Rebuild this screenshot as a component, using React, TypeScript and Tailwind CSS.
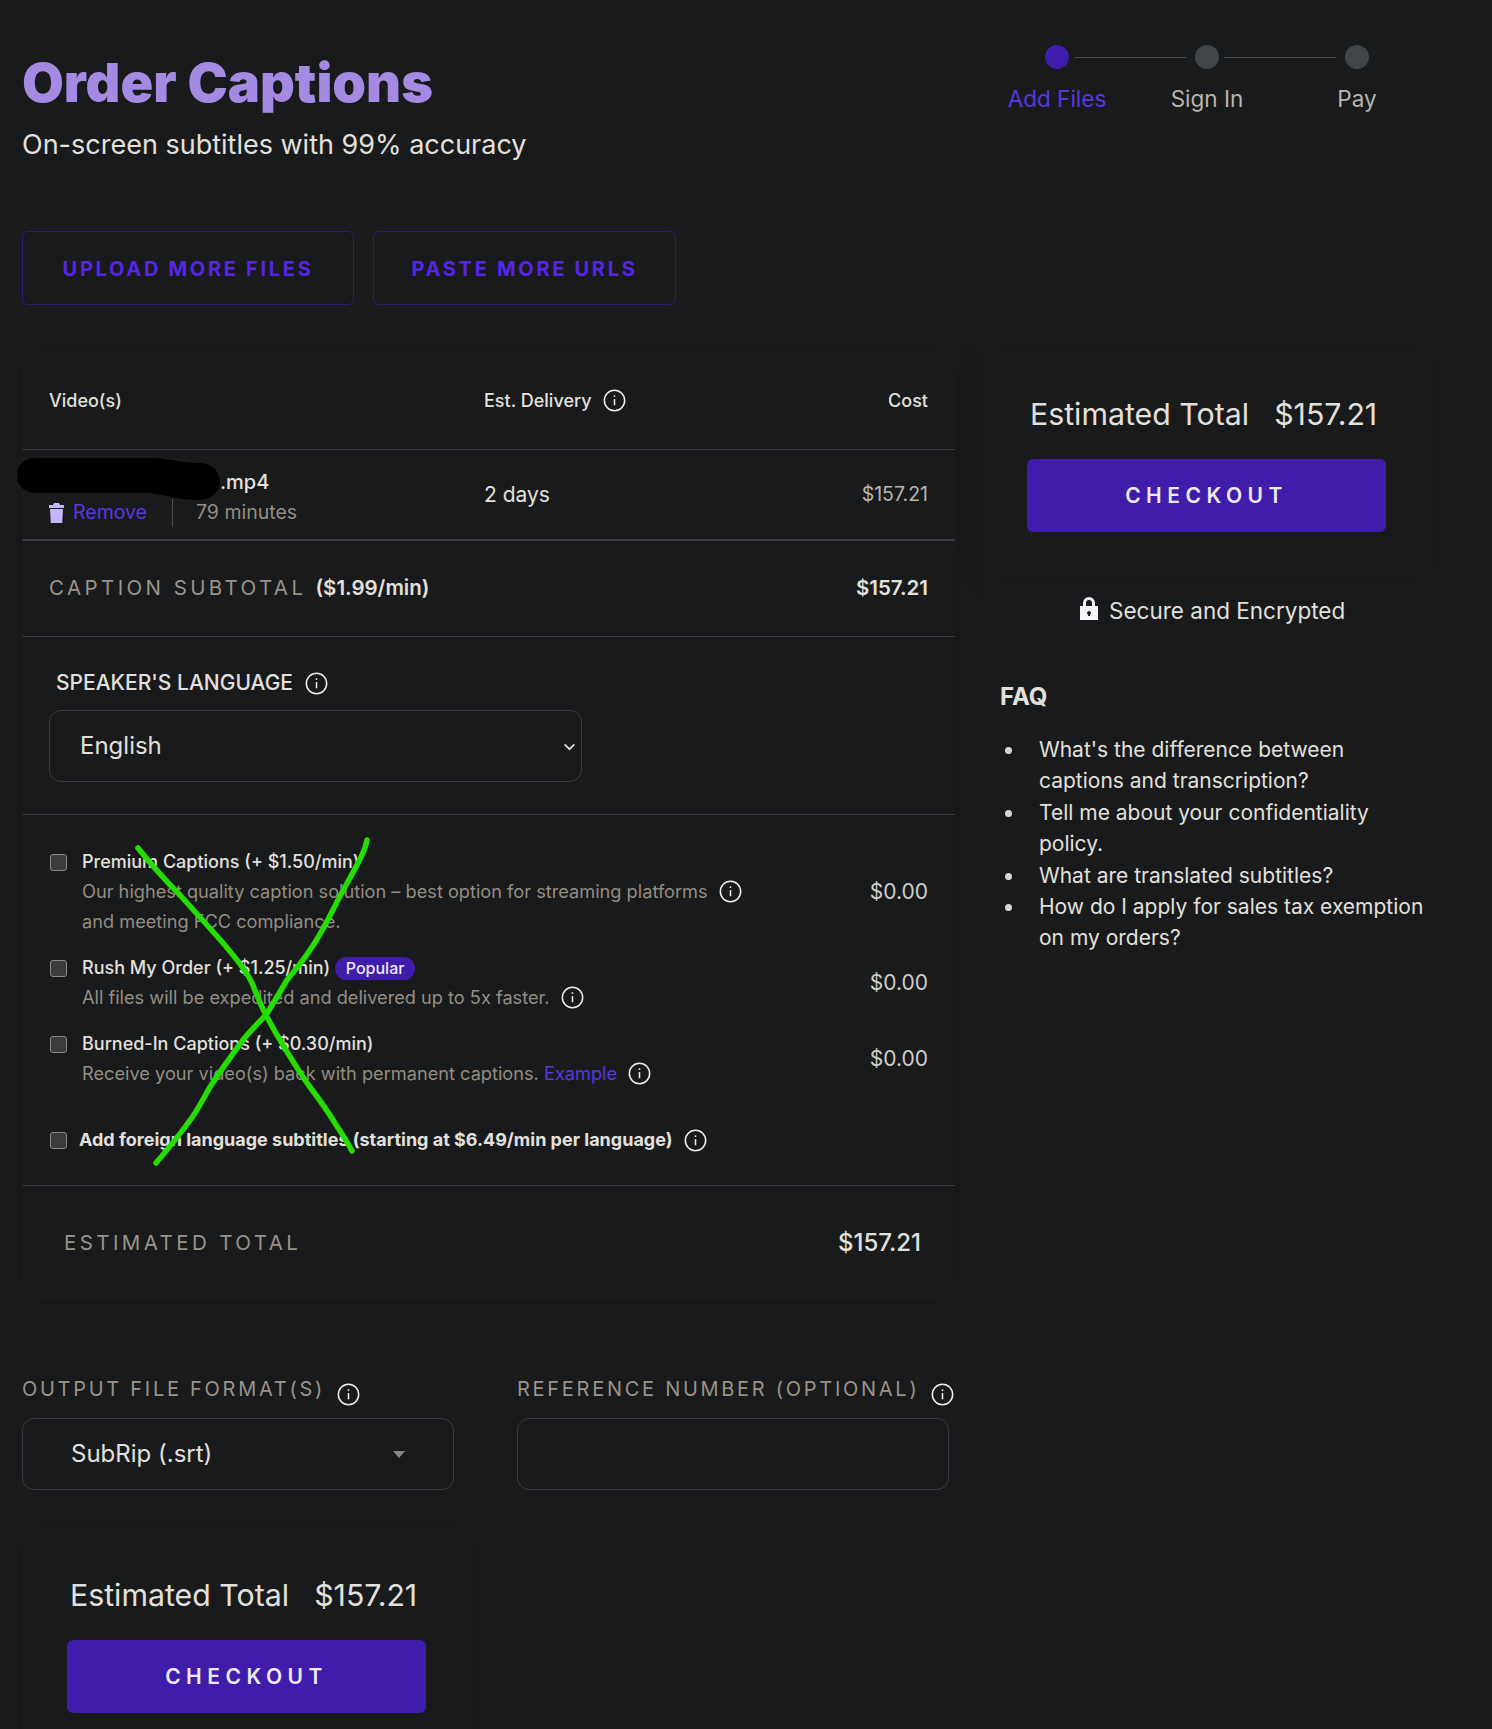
import React from "react";

function InfoIcon({ className }: { className: string }) {
  return (
    <svg viewBox="0 0 24 24" className={"shrink-0 " + className} fill="none" stroke="#eeeeee" strokeWidth="1.6">
      <circle cx="12" cy="12" r="10.6" />
      <line x1="12" y1="10.5" x2="12" y2="17" />
      <circle cx="12" cy="7.4" r="1" fill="#eeeeee" stroke="none" />
    </svg>
  );
}

function Box({ className = "" }: { className?: string }) {
  return <span className={"block w-[17px] h-[17px] rounded-[3px] bg-[#3b3b3b] border border-[#8a8a8a] shrink-0 " + className} />;
}

function TotalCard({ className = "" }: { className?: string }) {
  return (
    <div className={"rounded-lg bg-[#191a1c] shadow-[0_0_30px_rgba(0,0,0,0.1)] " + className}>
      <div className="flex h-[40px] items-center whitespace-nowrap pl-[3px] pt-[2px] text-[30.3px] text-[#e2e0dc]">
        <span>Estimated Total</span>
        <span className="ml-[25px]">$157.21</span>
      </div>
      <button className="mt-[25px] flex h-[73px] w-[359px] items-center justify-center rounded-[6px] bg-[#3f1ca9] text-[21px] font-semibold tracking-[5.5px] text-[#ece9f5]">
        CHECKOUT
      </button>
    </div>
  );
}

function Bullet({ children }: { children: React.ReactNode }) {
  return (
    <li className="flex">
      <span className="ml-[4px] mt-[13px] h-[7px] w-[7px] shrink-0 rounded-full bg-[#d8d6d2]" />
      <span className="ml-[27px]">{children}</span>
    </li>
  );
}

export default function App() {
  return (
    <div
      className="relative h-[1729px] w-full overflow-hidden bg-[#191a1c] text-[#e2e0dc]"
      style={{ fontFamily: "Inter, 'Liberation Sans', sans-serif" }}
    >
      <div className="flex pt-[45px]">
        <header className="w-[982px] pl-[22px]">
          <h1 className="mt-[8px] text-[54px] font-black leading-[60px] text-[#a48ae2]">Order Captions</h1>
          <p className="mt-[14px] text-[27px] leading-[36px] text-[#e2e0dc]">On-screen subtitles with 99% accuracy</p>
        </header>
        <nav className="w-[450px]">
          <div className="flex items-center pl-[63px]">
            <span className="h-[24px] w-[24px] rounded-full bg-[#3f1ca9]" />
            <span className="ml-[5px] mr-[9px] h-px w-[112px] bg-[#4a4c4e]" />
            <span className="h-[24px] w-[24px] rounded-full bg-[#404547]" />
            <span className="ml-[5px] mr-[9px] h-px w-[112px] bg-[#4a4c4e]" />
            <span className="h-[24px] w-[24px] rounded-full bg-[#404547]" />
          </div>
          <div className="mt-[15px] flex text-center text-[22.5px] leading-[30px] text-[#b8b4ae]">
            <span className="w-[150px] text-[#5b37e0]">Add Files</span>
            <span className="w-[150px]">Sign In</span>
            <span className="w-[150px]">Pay</span>
          </div>
        </nav>
      </div>

      <div className="mt-[68px] flex gap-[19px] pl-[22px]">
        <button className="h-[74px] w-[332px] rounded-[6px] border border-[#2c1a75] pt-[1px] text-[20px] font-bold tracking-[2.7px] text-[#5526e8]">
          UPLOAD MORE FILES
        </button>
        <button className="h-[74px] w-[303px] rounded-[6px] border border-[#2c1a75] pt-[1px] text-[20px] font-bold tracking-[2.7px] text-[#5526e8]">
          PASTE MORE URLS
        </button>
      </div>

      <div className="mt-[45px] flex items-start">
        <div className="ml-[22px] w-[933px]">
          <section className="rounded-lg bg-[#191a1c] shadow-[0_0_30px_rgba(0,0,0,0.1)]">
            <div className="flex h-[100px] items-center border-b border-[#3a3c3f] pl-[27px] pr-[27px] pt-[1px] text-[18px] font-medium text-[#e2e0dc]">
              <span className="w-[435px]">Video(s)</span>
              <span>Est. Delivery</span>
              <InfoIcon className="ml-[11px] h-[23px] w-[23px]" />
              <span className="ml-auto">Cost</span>
            </div>

            <div className="flex h-[91px] items-center border-b-2 border-[#3a3c3f] pl-[27px] pr-[27px]">
              <div className="w-[435px] pt-[4px]">
                <div className="h-[34px] pl-[171px] text-[20px] font-medium leading-[34px]">.mp4</div>
                <div className="-mt-px flex h-[30px] items-center text-[19.5px]">
                  <svg viewBox="0 0 15 20" className="h-[20px] w-[15px]" fill="#c4b5fd">
                    <path d="M5 0h5l1 2h3.500a.5.5 0 0 1 .5.5V5H0V2.500a.5.5 0 0 1 .5-.5H4z" />
                    <path d="M1 6h13l-.8 14H1.800z" />
                  </svg>
                  <span className="ml-[9px] text-[#5b37e0]">Remove</span>
                  <span className="ml-[25px] h-[28px] w-px bg-[#4a4c4e]" />
                  <span className="ml-[23px] text-[#938d82]">79 minutes</span>
                </div>
              </div>
              <span className="text-[21px] text-[#e2e0dc]">2 days</span>
              <span className="ml-auto pt-[1px] text-[19.5px] text-[#b8b4ae]">$157.21</span>
            </div>

            <div className="flex h-[96px] items-center border-b border-[#3a3c3f] pl-[27px] pr-[27px]">
              <span className="text-[20.5px] tracking-[3.4px] text-[#9a9389]">CAPTION SUBTOTAL</span>
              <span className="ml-[9px] text-[20.5px] font-semibold">($1.99/min)</span>
              <span className="ml-auto text-[20.5px] font-semibold">$157.21</span>
            </div>

            <div className="h-[178px] border-b border-[#3a3c3f] pl-[27px] pt-[32px]">
              <div className="flex h-[28px] items-center pl-[7px] text-[21px] font-medium">
                <span>SPEAKER'S LANGUAGE</span>
                <InfoIcon className="ml-[12px] h-[23px] w-[23px]" />
              </div>
              <div className="mt-[13px] flex h-[72px] w-[533px] items-center justify-between rounded-[12px] border border-[#3a3c3f] pl-[30px] pr-[5px] text-[24px]">
                <span>English</span>
                <svg viewBox="0 0 12 12" className="h-[13px] w-[13px]" fill="none" stroke="#e2e0dc" strokeWidth="1.600">
                  <path d="M1.500 4l4.500 4.500L10.500 4" />
                </svg>
              </div>
            </div>

            <div className="h-[371px] border-b border-[#3a3c3f] pl-[28px] pr-[27px] pt-[32px] text-[18px] leading-[30px]">
              <div className="flex">
                <Box className="mt-[7px]" />
                <div className="ml-[15px]">
                  <div className="font-medium">Premium Captions (+ $1.50/min)</div>
                  <div className="-mt-px pb-px text-[18.2px] text-[#938d82]">
                    Our highest quality caption solution – best option for streaming platforms
                    <InfoIcon className="ml-[11px] inline-block h-[23px] w-[23px] align-[-5px]" />
                    <br />
                    and meeting FCC compliance.
                  </div>
                </div>
                <span className="ml-auto self-center text-[21px] text-[#d0cdc8]">$0.00</span>
              </div>
              <div className="mt-[16px] flex">
                <Box className="mt-[7px]" />
                <div className="ml-[15px]">
                  <div className="flex items-center font-medium">
                    Rush My Order (+ $1.25/min)
                    <span className="ml-[5px] flex h-[23px] items-center rounded-full bg-[#3f1ca9] px-[10.5px] text-[16px] text-[#ece9f5]">Popular</span>
                  </div>
                  <div className="-mt-px pb-px text-[18.2px] text-[#938d82]">
                    All files will be expedited and delivered up to 5x faster.
                    <InfoIcon className="ml-[11px] inline-block h-[23px] w-[23px] align-[-5px]" />
                  </div>
                </div>
                <span className="ml-auto self-center pb-[1px] text-[21px] text-[#d0cdc8]">$0.00</span>
              </div>
              <div className="mt-[16px] flex">
                <Box className="mt-[7px]" />
                <div className="ml-[15px]">
                  <div className="font-medium">Burned-In Captions (+ $0.30/min)</div>
                  <div className="-mt-px pb-px text-[18.2px] text-[#938d82]">
                    Receive your video(s) back with permanent captions. <span className="text-[#5b37e0]">Example</span>
                    <InfoIcon className="ml-[11px] inline-block h-[23px] w-[23px] align-[-5px]" />
                  </div>
                </div>
                <span className="ml-auto self-center pb-[1px] text-[21px] text-[#d0cdc8]">$0.00</span>
              </div>
              <div className="mt-[36px] flex items-center">
                <Box />
                <span className="ml-[12px] font-bold">Add foreign language subtitles (starting at $6.49/min per language)</span>
                <InfoIcon className="ml-[12px] h-[23px] w-[23px]" />
              </div>
            </div>

            <div className="flex h-[114px] items-center pl-[42px] pr-[34px]">
              <span className="text-[20.5px] tracking-[3.4px] text-[#9a9389]">ESTIMATED TOTAL</span>
              <span className="ml-auto text-[24px] font-medium">$157.21</span>
            </div>
          </section>

          <div className="mt-[74px] flex">
            <div className="w-[495px]">
              <div className="flex h-[30px] items-center whitespace-nowrap text-[20px] tracking-[2.72px] text-[#9a9389]">
                <span>OUTPUT FILE FORMAT(S)</span>
                <InfoIcon className="ml-[12px] mt-[11px] h-[23px] w-[23px]" />
              </div>
              <div className="mt-[14px] flex h-[72px] w-[432px] items-center justify-between rounded-[12px] border border-[#3a3c3f] pl-[48px] pr-[48px] text-[24px]">
                <span>SubRip (.srt)</span>
                <svg viewBox="0 0 12 7" className="h-[7px] w-[12px]" fill="#8a857e">
                  <path d="M0 0h12L6 7z" />
                </svg>
              </div>
            </div>
            <div className="w-[432px]">
              <div className="flex h-[30px] items-center whitespace-nowrap text-[20px] tracking-[2.72px] text-[#9a9389]">
                <span>REFERENCE NUMBER (OPTIONAL)</span>
                <InfoIcon className="ml-[12px] mt-[11px] h-[23px] w-[23px]" />
              </div>
              <div className="mt-[14px] h-[72px] w-[432px] rounded-[12px] border border-[#3a3c3f]" />
            </div>
          </div>

          <TotalCard className="mt-[40px] w-[449px] pb-[45px] pl-[45px] pt-[45px]" />
        </div>

        <aside className="ml-[30px] w-[447px]">
          <TotalCard className="pb-[45px] pl-[42px] pt-[44px]" />
          <div className="mt-[19px] flex h-[30px] items-center pl-[95px] text-[22.5px] text-[#e2e0dc]">
            <svg viewBox="0 0 18 23" className="mb-[6px] h-[23px] w-[18px]" fill="#f6f3ff">
              <path fillRule="evenodd" d="M9 0a6 6 0 0 1 6 6v3h3v14H0V9h3V6a6 6 0 0 1 6-6zm0 3a3 3 0 0 0-3 3v3h6V6a3 3 0 0 0-3-3zm0 11a2 2 0 0 0-1 3.700V19h2v-1.300A2 2 0 0 0 9 14z" />
            </svg>
            <span className="ml-[11px]">Secure and Encrypted</span>
          </div>
          <h2 className="mt-[53px] pl-[15px] text-[24px] font-bold leading-[36px]">FAQ</h2>
          <ul className="mt-[19px] pl-[16px] pr-[6px] text-[21px] leading-[31.4px]">
            <Bullet>What's the difference between captions and transcription?</Bullet>
            <Bullet>Tell me about your confidentiality policy.</Bullet>
            <Bullet>What are translated subtitles?</Bullet>
            <Bullet>How do I apply for sales tax exemption on my orders?</Bullet>
          </ul>
        </aside>
      </div>

      <svg className="pointer-events-none absolute left-0 top-0" width="1000" height="1200" fill="none">
        <path d="M35 458H155C175 460 185 463 200 463C212 463 220 472 220 482C220 493 210 500 198 500C180 500 165 495 150 493H35C24 493 17 485 17 475C17 466 24 458 35 458Z" fill="#000" />
        <path d="M138 848C150 863 165 880 180 895C195 912 210 928 223 943C235 957 246 970 252 983C257 995 261 1006 266 1015C278 1038 293 1062 307 1083C316 1095 325 1107 333 1120C340 1131 347 1141 352 1151" stroke="#25dd00" strokeWidth="5.5" strokeLinecap="round" strokeLinejoin="round" />
        <path d="M367 840C366 846 364 851 362 855C355 870 345 886 337 902C328 920 320 936 310 950C303 961 295 970 287 980C280 992 273 1004 266 1015C258 1023 250 1031 243 1040C232 1055 221 1070 210 1087C203 1099 197 1112 188 1123C178 1137 167 1150 156 1163" stroke="#25dd00" strokeWidth="5.5" strokeLinecap="round" strokeLinejoin="round" />
      </svg>
    </div>
  );
}
